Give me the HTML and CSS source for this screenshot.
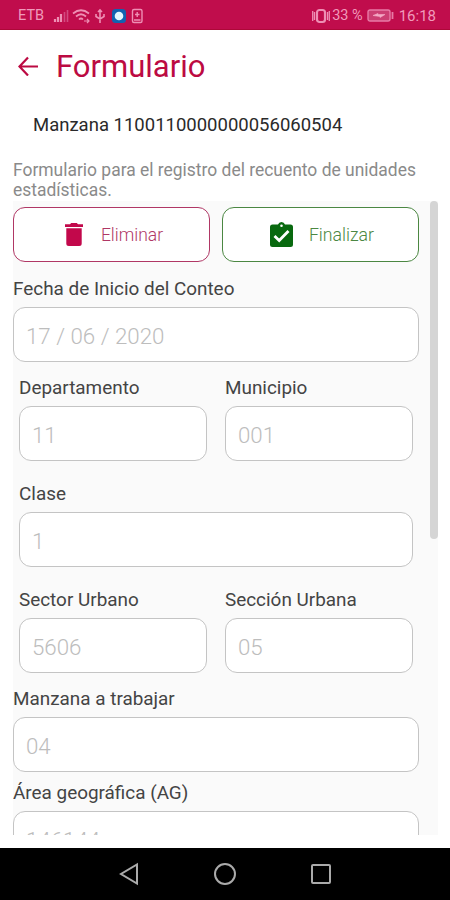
FILE: index.html
```
<!DOCTYPE html>
<html lang="es">
<head>
    <meta charset="UTF-8">
    <meta name="viewport" content="width=device-width, initial-scale=1.0">
    <title>Formulario</title>
    <link rel="stylesheet" href="styles.css">
</head>
<body>
    <!-- Status bar -->
    <div class="status-bar">
        <span class="carrier">ETB</span>
        <svg class="status-icons" width="92" height="18" viewBox="0 0 92 18" fill="none" stroke="#EE8FB4" stroke-width="1.4">
            <path d="M2 15V12M5 15V10M8 15V7" stroke-width="2.2"/>
            <path d="M11.500 15V5M14.500 15V3" stroke="#D24A80" stroke-width="1.600"/>
            <path d="M20 6.500Q28 0 36 6.500M23 9.500Q28 5 33 9.500M26 12.500Q28 10.500 30 12.500" stroke-width="1.700"/>
            <path d="M31 14H36M34 12L36 14L34 16" stroke-width="1.200"/>
            <path d="M47 3V16M43 7V9.500L47 12L51 9.500V7M45 5L47 3L49 5" stroke-width="1.600"/>
            <rect x="59" y="2" width="14" height="14" rx="3.500" fill="#1262B0" stroke="none"/>
            <circle cx="66" cy="9" r="4.300" fill="#E2F8FF" stroke="none"/>
            <rect x="79.500" y="2.500" width="9.500" height="13" rx="1.500"/>
            <path d="M84.200 5V10M82 7.500H86.500M81 13H87.500"/>
        </svg>
        <svg class="vibrate" width="18" height="16" viewBox="0 0 18 16" fill="none" stroke="#EE8FB4">
            <rect x="5" y="2" width="8" height="12" rx="2.500" stroke-width="2.200"/>
            <path d="M2.500 4V12M15.500 4V12M.7 3V13M17.300 3V13" stroke-width="1.300"/>
        </svg>
        <span class="percent">33 %</span>
        <svg class="battery" width="27" height="13" viewBox="0 0 27 13" fill="none" stroke="#E77BA6">
            <rect x="1" y="1" width="22" height="11" rx="2" fill="#CC3E72" stroke-width="1.400"/>
            <path d="M25.500 3V10" stroke-width="1.800"/>
            <path d="M6 6.500L11 4.500V5.500H18L13 8.500V7.500Z" fill="#F4A9C5" stroke="#F4A9C5" stroke-width=".6"/>
        </svg>
        <span class="clock">16:18</span>
    </div>

    <!-- Header -->
    <header class="header">
        <svg width="20" height="20" viewBox="0 0 20 20" fill="none" stroke="#BC0A42" stroke-width="2.2">
            <path d="M20 10.500H1.500M10 1.500L1.500 10.500L10 19.500"/>
        </svg>
        <h1>Formulario</h1>
    </header>

    <p class="block-code">Manzana 1100110000000056060504</p>
    <p class="description">Formulario para el registro del recuento de unidades estadísticas.</p>

    <!-- Form -->
    <main class="form-scroll">
        <div class="actions">
            <button class="btn btn-delete">
                <svg width="18" height="23" viewBox="0 0 18 23" fill="#C2084B">
                    <path d="M0 1.300H5L6.200 0H11.800L13 1.300H18V4H0ZM1.300 5.300H16.700V20.500Q16.700 23 14.200 23H3.800Q1.300 23 1.300 20.500Z"/>
                </svg>
                <span>Eliminar</span>
            </button>
            <button class="btn btn-finish">
                <svg width="23" height="25" viewBox="0 0 23 25">
                    <path fill="#08690F" fill-rule="evenodd" d="M2.500 2.500H8A3.700 3.700 0 0 1 15 2.500H20.500Q23 2.500 23 5V22.500Q23 25 20.500 25H2.500Q0 25 0 22.500V5Q0 2.500 2.500 2.500ZM11.500 2.400A1.300 1.300 0 1 0 11.500 5A1.300 1.300 0 1 0 11.500 2.400Z"/>
                    <path d="M4.500 14L9.200 18.500L18.500 9" fill="none" stroke="#FFFFFF" stroke-width="2.800"/>
                </svg>
                <span>Finalizar</span>
            </button>
        </div>

        <div class="field">
            <label for="fecha">Fecha de Inicio del Conteo</label>
            <input type="text" id="fecha" value="17 / 06 / 2020" disabled>
        </div>

        <div class="grid">
            <div class="field">
                <label for="departamento">Departamento</label>
                <input type="text" id="departamento" value="11" disabled>
            </div>
            <div class="field">
                <label for="municipio">Municipio</label>
                <input type="text" id="municipio" value="001" disabled>
            </div>
            <div class="field wide">
                <label for="clase">Clase</label>
                <input type="text" id="clase" value="1" disabled>
            </div>
            <div class="field">
                <label for="sector">Sector Urbano</label>
                <input type="text" id="sector" value="5606" disabled>
            </div>
            <div class="field">
                <label for="seccion">Sección Urbana</label>
                <input type="text" id="seccion" value="05" disabled>
            </div>
        </div>

        <div class="field">
            <label for="manzana">Manzana a trabajar</label>
            <input type="text" id="manzana" value="04" disabled>
        </div>
        <div class="field area">
            <label for="area">Área geográfica (AG)</label>
            <input type="text" id="area" value="146144" disabled>
        </div>
        <div class="scrollbar"></div>
    </main>

    <!-- Navigation bar -->
    <nav class="nav-bar">
        <svg width="22" height="24" viewBox="0 0 22 24"><path d="M19 2.500V21.500L3 12Z"/></svg>
        <svg width="24" height="24" viewBox="0 0 24 24"><circle cx="12" cy="12" r="10"/></svg>
        <svg width="22" height="24" viewBox="0 0 22 24"><rect x="2" y="3" width="18" height="18" rx="1"/></svg>
    </nav>
</body>
</html>
```
FILE: styles.css
```
/* General Styles */
* {
    box-sizing: border-box;
}

body {
    font-family: Roboto, sans-serif;
    margin: 0;
    height: 900px;
    display: flex;
    flex-direction: column;
    overflow: hidden;
    background: #FFFFFF;
    color: #444444;
}

/* Status bar */
.status-bar {
    display: flex;
    align-items: center;
    height: 30px;
    padding: 2px 14px 0 18px;
    background: #C00D4C;
    border-bottom: 1px solid #AD0838;
    color: #F09ABB;
    font-size: 14.5px;
    flex-shrink: 0;
}

.status-icons {
    margin-left: 9px;
}

.vibrate {
    margin-left: auto;
}

.percent {
    margin-left: 2px;
}

.battery {
    margin: 0 5px 0 4px;
}

.clock {
    font-size: 15px;
}

/* Header */
.header {
    display: flex;
    align-items: center;
    gap: 18px;
    height: 72px;
    padding-left: 18px;
    flex-shrink: 0;
}

.header h1 {
    margin: 0;
    color: #BC0A42;
    font-size: 31px;
    font-weight: 400;
}

.block-code {
    margin: 12px 0 0 33px;
    color: #2A2A2A;
    font-size: 18.5px;
    line-height: 22px;
}

.description {
    margin: 24px 20px 0 13px;
    height: 41px;
    color: #8A8A8A;
    font-size: 17.45px;
    line-height: 20px;
}

/* Form */
.form-scroll {
    position: relative;
    width: 425px;
    height: 634px;
    margin-left: 13px;
    padding: 6px 19px 0 0;
    overflow: hidden;
    background: #FAFAFA;
    flex-shrink: 0;
}

.actions {
    display: grid;
    grid-template-columns: 1fr 1fr;
    gap: 12px;
    margin-bottom: 17px;
}

.btn {
    display: flex;
    align-items: center;
    justify-content: center;
    gap: 18px;
    height: 55px;
    background: #FFFFFF;
    border: 1px solid;
    border-radius: 12px;
    font-family: inherit;
    font-size: 18px;
    font-weight: 300;
}

.btn-delete {
    padding: 0 3px 0 8px;
    color: #B03765;
    font-size: 17.5px;
}

.btn-finish {
    padding: 0 5px 0 8px;
    color: #4B8742;
    gap: 16px;
    font-size: 17.7px;
}

.field label {
    display: block;
    height: 28px;
    font-size: 18.9px;
    line-height: 20px;
}

.field input {
    display: block;
    width: 100%;
    height: 55px;
    padding: 2px 12px 0;
    background: #FFFFFF;
    border: 1px solid #C4C4C4;
    border-radius: 12px;
    color: #BDBDBD;
    font-family: inherit;
    font-size: 22.3px;
    font-weight: 300;
}

.grid {
    display: grid;
    grid-template-columns: 1fr 1fr;
    gap: 23px 18px;
    padding: 16px 6px;
}

.wide {
    grid-column: span 2;
}

.area {
    margin-top: 11px;
}

.scrollbar {
    position: absolute;
    top: 0;
    right: 0;
    width: 8px;
    height: 338px;
    background: #D5D5D5;
    border-radius: 4px;
}

/* Navigation bar */
.nav-bar {
    display: flex;
    align-items: center;
    justify-content: center;
    gap: 73px;
    height: 52px;
    margin-top: auto;
    background: #000000;
    flex-shrink: 0;
}

.nav-bar svg {
    fill: none;
    stroke: #AAAAAA;
    stroke-width: 2;
}
```
